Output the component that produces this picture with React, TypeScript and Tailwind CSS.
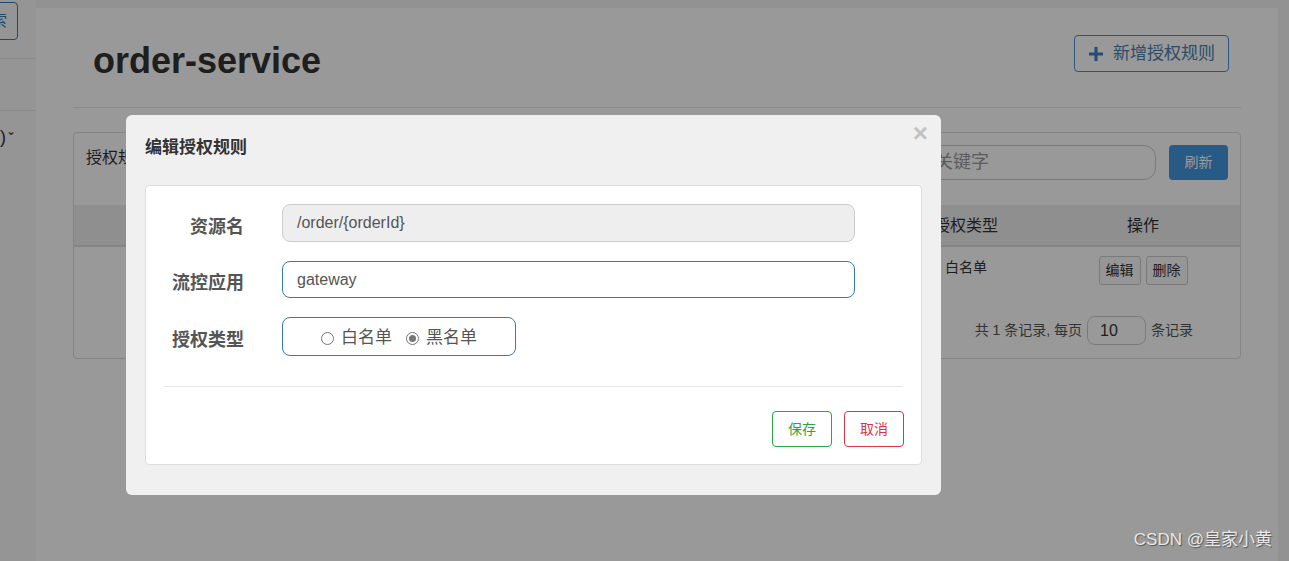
import React from "react";

const font = {
  fontFamily: '"Liberation Sans", "Noto Sans CJK SC", sans-serif',
};

function Sidebar() {
  return (
    <aside className="w-[36px] shrink-0 overflow-hidden bg-[#f8f8f8] text-[#333]">
      <div className="flex h-[59px] justify-end border-b border-[#e6e6e6] pr-[18px] pt-[2px]">
        <button className="h-[38px] whitespace-nowrap rounded-[4px] border border-[#337ab7] px-[10px] text-[16px] text-[#337ab7]">
          搜索
        </button>
      </div>
      <div className="h-[52px] border-b border-[#e6e6e6]" />
      <div className="flex justify-end whitespace-nowrap pr-[20px] pt-[12px] text-[18px] leading-[28px]">
        <span>(1)</span>
        <span className="relative -top-[6px] text-[12px]">&#8964;</span>
      </div>
    </aside>
  );
}

function RulePanel() {
  return (
    <section className="mt-[24px] rounded-[4px] border border-[#dddddd]">
      <div className="flex h-[72px] items-start justify-between px-[12px] pt-[12px]">
        <h3 className="mt-[1px] text-[16px] leading-[24px] text-[#333]">授权规则</h3>
        <div className="flex items-center gap-[13px]">
          <input
            readOnly
            placeholder="请输入关键字"
            className="h-[35px] w-[288px] rounded-[12px] border border-[#ccc] px-[12px] text-[18px] placeholder:text-[#999]"
          />
          <button className="h-[35px] w-[59px] rounded-[4px] bg-[#4196de] text-[14px] text-white">
            刷新
          </button>
        </div>
      </div>
      <div className="flex h-[42px] items-center border-b-2 border-[#dddddd] bg-[#eeeeee] pt-[2px] text-[16px] text-[#333]">
        <div className="flex-1" />
        <div className="w-[160px] text-center">授权类型</div>
        <div className="w-[194px] text-center">操作</div>
      </div>
      <div className="flex h-[52px] items-start text-[14px] text-[#333]">
        <div className="flex-1" />
        <div className="w-[160px] pt-[10px] text-center">白名单</div>
        <div className="flex w-[194px] justify-center gap-[5px] pt-[9px]">
          <button className="h-[29px] w-[42px] rounded-[3px] border border-[#ccc] bg-[#fafafa]">
            编辑
          </button>
          <button className="h-[29px] w-[42px] rounded-[3px] border border-[#ccc] bg-[#fafafa]">
            删除
          </button>
        </div>
      </div>
      <div className="flex h-[59px] items-start justify-end gap-[5px] pr-[47px] pt-[17px] text-[14px] text-[#555]">
        <span className="leading-[29px]">共 1 条记录, 每页</span>
        <input
          readOnly
          value="10"
          className="h-[29px] w-[59px] rounded-[8px] border border-[#ccc] px-[12px] text-[16px] text-[#333]"
        />
        <span className="leading-[29px]">条记录</span>
      </div>
    </section>
  );
}

function Radio({ checked, label }: { checked?: boolean; label: string }) {
  return (
    <label className="flex items-center gap-[7px]">
      <span className="flex h-[13px] w-[13px] items-center justify-center rounded-full border border-[#767676] bg-white">
        {checked && <span className="h-[7px] w-[7px] rounded-full bg-[#777]" />}
      </span>
      <span>{label}</span>
    </label>
  );
}

function FormRow({ label, children }: { label: string; children: React.ReactNode }) {
  return (
    <div className="flex items-center">
      <div className="w-[98px] pt-[8px] text-right text-[18px] font-bold text-[#555]">{label}</div>
      <div className="ml-[38px]">{children}</div>
    </div>
  );
}

function EditModal() {
  return (
    <div className="absolute left-[126px] top-[115px] h-[380px] w-[815px] rounded-[6px] bg-[#f0f0f0] px-[19px]">
      <div className="relative flex h-[70px] items-center">
        <h4 className="-mt-[5px] text-[17px] font-bold text-[#333]">编辑授权规则</h4>
        <span className="absolute -right-[6px] top-[5px] text-[26px] font-bold leading-[26px] text-[#c2c2c2]">
          ×
        </span>
      </div>
      <div className="h-[280px] rounded-[4px] border border-[#dddddd] bg-white">
        <div className="flex flex-col gap-[19px] pt-[18px]">
          <FormRow label="资源名">
            <div className="flex h-[38px] w-[573px] items-center rounded-[8px] border border-[#ccc] bg-[#eeeeee] px-[14px] text-[16px] text-[#555]">
              /order/{"{orderId}"}
            </div>
          </FormRow>
          <FormRow label="流控应用">
            <div className="flex h-[37px] w-[573px] items-center rounded-[8px] border border-[#337ab7] bg-white px-[14px] text-[16px] text-[#555]">
              gateway
            </div>
          </FormRow>
          <FormRow label="授权类型">
            <div className="flex h-[39px] w-[234px] items-center justify-center gap-[14px] rounded-[8px] border border-[#337ab7] pt-[3px] text-[17px] text-[#555]">
              <Radio label="白名单" />
              <Radio checked label="黑名单" />
            </div>
          </FormRow>
        </div>
        <div className="mx-[18px] mt-[30px] border-t border-[#e5e5e5]" />
        <div className="flex justify-end gap-[12px] pr-[17px] pt-[24px] text-[14px]">
          <button className="h-[36px] w-[60px] rounded-[4px] border border-[#28a745] text-[#28a745]">
            保存
          </button>
          <button className="h-[36px] w-[60px] rounded-[4px] border border-[#dc3545] text-[#dc3545]">
            取消
          </button>
        </div>
      </div>
    </div>
  );
}

export default function App() {
  return (
    <div style={font} className="relative flex h-[561px] w-[1289px] overflow-hidden bg-[#f3f3f3]">
      <Sidebar />
      <main className="flex-1 pr-[11px] pt-[8px]">
        <div className="h-full bg-white px-[37px]">
          <header className="flex h-[100px] items-start justify-between border-b border-[#e6e6e6]">
            <h1 className="pl-[20px] pt-[33px] text-[36px] font-bold leading-[40px] text-[#333]">
              order-service
            </h1>
            <button className="mr-[12px] mt-[27px] flex h-[37px] items-center gap-[10px] rounded-[4px] border border-[#4a90d9] pl-[14px] pr-[13px] text-[17px] text-[#4a7fb0]">
              <svg width="14" height="14" viewBox="0 0 14 14">
                <path d="M5.5 0h3v5.5H14v3H8.5V14h-3V8.5H0v-3h5.5z" fill="#3e7cc0" />
              </svg>
              新增授权规则
            </button>
          </header>
          <RulePanel />
        </div>
      </main>
      <div className="absolute inset-0 bg-black/40" />
      <EditModal />
      <div className="absolute bottom-[9px] right-[17px] text-[17px] text-[#e8e8e8] [text-shadow:1px_1px_1px_#555]">
        CSDN @皇家小黄
      </div>
    </div>
  );
}
